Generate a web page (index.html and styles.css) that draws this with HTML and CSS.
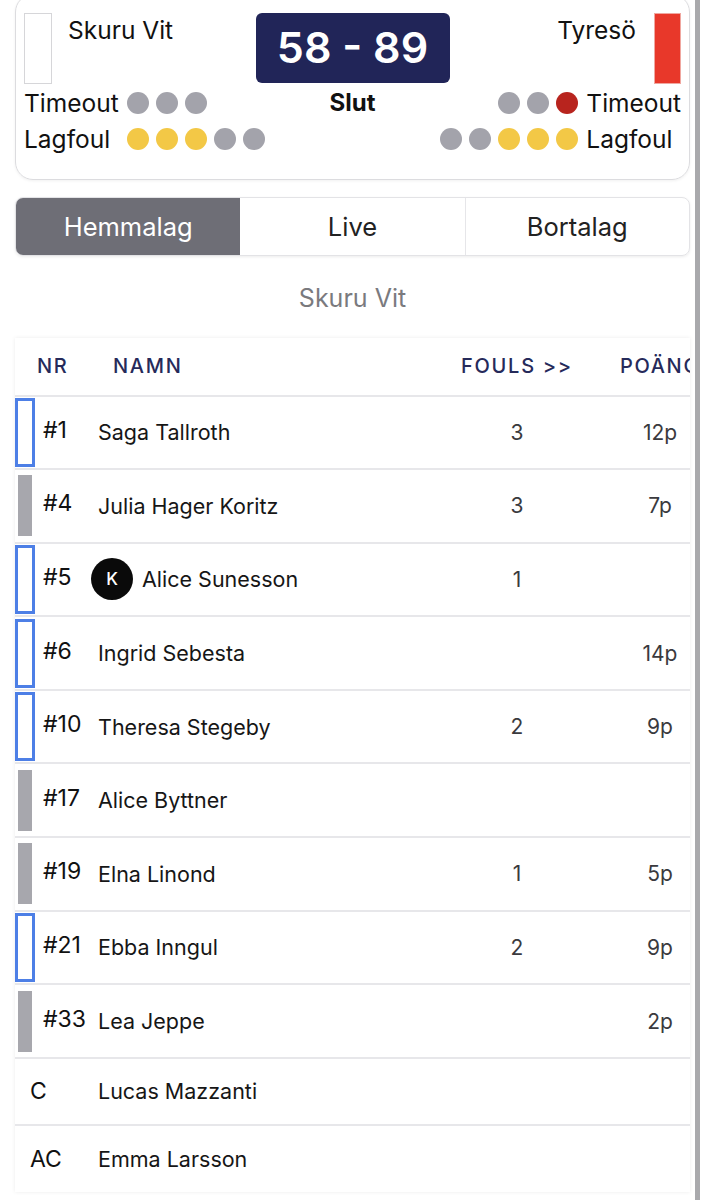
FILE: index.html
```html
<!DOCTYPE html>
<html lang="sv">
<head>
<meta charset="utf-8">
<title>Skuru Vit – Tyresö</title>
<link rel="stylesheet" href="styles.css">
</head>
<body>
<div class="screen">
  <main class="content">
    <section class="scoreboard">
      <div class="side side-home">
        <div class="team">
          <span class="jersey jersey-white"></span>
          <span class="team-name">Skuru Vit</span>
        </div>
        <div class="stats">
          <span class="label">Timeout</span>
          <span class="dots"><i class="dot"></i><i class="dot"></i><i class="dot"></i></span>
          <span class="label">Lagfoul</span>
          <span class="dots"><i class="dot yellow"></i><i class="dot yellow"></i><i class="dot yellow"></i><i class="dot"></i><i class="dot"></i></span>
        </div>
      </div>
      <div class="middle">
        <div class="score">58 - 89</div>
        <div class="status">Slut</div>
      </div>
      <div class="side side-away">
        <div class="team">
          <span class="team-name">Tyresö</span>
          <span class="jersey jersey-red"></span>
        </div>
        <div class="stats">
          <span class="dots"><i class="dot"></i><i class="dot"></i><i class="dot red"></i></span>
          <span class="label">Timeout</span>
          <span class="dots"><i class="dot"></i><i class="dot"></i><i class="dot yellow"></i><i class="dot yellow"></i><i class="dot yellow"></i></span>
          <span class="label">Lagfoul</span>
        </div>
      </div>
    </section>

    <nav class="tabs">
      <span class="tab active">Hemmalag</span>
      <span class="tab">Live</span>
      <span class="tab">Bortalag</span>
    </nav>

    <h2 class="roster-title">Skuru Vit</h2>

    <section class="roster">
      <div class="roster-inner">
        <div class="row head">
          <span class="c-nr">NR</span>
          <span class="c-name">NAMN</span>
          <span class="c-fouls">FOULS &gt;&gt;</span>
          <span class="c-pts">POÄNG</span>
        </div>

        <div class="row player">
          <span class="mark on"></span><span class="num">#1</span>
          <span class="name">Saga Tallroth</span>
          <span class="fouls">3</span><span class="pts">12p</span>
        </div>
        <div class="row player">
          <span class="mark off"></span><span class="num">#4</span>
          <span class="name">Julia Hager Koritz</span>
          <span class="fouls">3</span><span class="pts">7p</span>
        </div>
        <div class="row player">
          <span class="mark on"></span><span class="num">#5</span>
          <span class="name"><span class="captain">K</span>Alice Sunesson</span>
          <span class="fouls">1</span><span class="pts"></span>
        </div>
        <div class="row player">
          <span class="mark on"></span><span class="num">#6</span>
          <span class="name">Ingrid Sebesta</span>
          <span class="fouls"></span><span class="pts">14p</span>
        </div>
        <div class="row player">
          <span class="mark on"></span><span class="num">#10</span>
          <span class="name">Theresa Stegeby</span>
          <span class="fouls">2</span><span class="pts">9p</span>
        </div>
        <div class="row player">
          <span class="mark off"></span><span class="num">#17</span>
          <span class="name">Alice Byttner</span>
          <span class="fouls"></span><span class="pts"></span>
        </div>
        <div class="row player">
          <span class="mark off"></span><span class="num">#19</span>
          <span class="name">Elna Linond</span>
          <span class="fouls">1</span><span class="pts">5p</span>
        </div>
        <div class="row player">
          <span class="mark on"></span><span class="num">#21</span>
          <span class="name">Ebba Inngul</span>
          <span class="fouls">2</span><span class="pts">9p</span>
        </div>
        <div class="row player">
          <span class="mark off"></span><span class="num">#33</span>
          <span class="name">Lea Jeppe</span>
          <span class="fouls"></span><span class="pts">2p</span>
        </div>

        <div class="row staff">
          <span class="role">C</span>
          <span class="name">Lucas Mazzanti</span>
        </div>
        <div class="row staff">
          <span class="role">AC</span>
          <span class="name">Emma Larsson</span>
        </div>
      </div>
    </section>
  </main>
  <div class="rail"></div>
</div>
</body>
</html>
```

FILE: styles.css
```css
* { box-sizing: border-box; }

html, body {
  margin: 0;
  background: #fff;
}

body {
  font-family: Inter, "Noto Sans", sans-serif;
  color: #111;
  overflow: hidden;
}

.screen {
  display: flex;
  height: 1200px;
  overflow: hidden;
}

.content {
  width: 695px;
  flex: none;
  padding: 0 5px 0 15px;
}

.rail {
  width: 5px;
  flex: none;
  background: #a9a9ac;
}

/* ---------- scoreboard ---------- */
.scoreboard {
  margin-top: -6px;
  border: 1.5px solid #dcdcdf;
  border-radius: 18px;
  padding: 17.5px 8px 22px 8px;
  display: grid;
  grid-template-columns: minmax(0, 1fr) 194px minmax(0, 1fr);
  box-shadow: 0 1px 3px rgba(0, 0, 0, 0.06);
}

.side { display: flex; flex-direction: column; min-width: 0; }
.side-home { align-items: flex-start; }
.side-away { align-items: flex-end; }

.team {
  display: flex;
  align-items: flex-start;
  height: 71px;
}

.jersey {
  width: 28px;
  height: 71px;
  flex: none;
}
.jersey-white { border: 1px solid #d6d6d9; background: #fff; }
.jersey-red { width: 27px; background: #e8382a; border: 1px solid #f0a7a0; }

.team-name {
  font-size: 24.5px;
  line-height: 28px;
  padding-top: 3px;
  white-space: nowrap;
}
.side-home .team-name { margin-left: 16px; }
.side-away .team-name { margin-right: 18px; }

.stats {
  display: grid;
  grid-template-columns: auto auto;
  column-gap: 8px;
  align-items: center;
  margin-top: 1px;
  flex: none;
}
.side-away .stats .dots { justify-self: end; }
.side-away .stats .label { justify-self: start; }

.label {
  font-size: 24.5px;
  line-height: 36px;
  white-space: nowrap;
}

.dots { display: flex; gap: 7px; }
.dot {
  width: 22px;
  height: 22px;
  border-radius: 50%;
  background: #a3a3ab;
}
.dot.yellow { background: #f3c846; }
.dot.red { background: #b8241e; }

.middle {
  display: flex;
  flex-direction: column;
  align-items: center;
}

.score {
  width: 194px;
  height: 70px;
  background: #212558;
  color: #fff;
  border-radius: 6px;
  display: flex;
  align-items: center;
  justify-content: center;
  font-size: 43px;
  font-weight: 600;
  padding-bottom: 2px;
}

.status {
  margin-top: 2px;
  font-size: 24px;
  font-weight: 700;
  line-height: 36px;
}

/* ---------- tabs ---------- */
.tabs {
  margin-top: 17px;
  display: grid;
  grid-template-columns: repeat(3, 1fr);
  height: 59px;
  border: 1px solid #e3e3e6;
  border-radius: 8px;
  overflow: hidden;
  box-shadow: 0 1px 3px rgba(0, 0, 0, 0.08);
}

.tab {
  display: flex;
  align-items: center;
  justify-content: center;
  font-size: 25.5px;
  color: #222;
}
.tab + .tab { border-left: 1px solid #e6e6e9; }
.tab.active { background: #6e6e76; color: #fff; border-left: none; }
.tab.active + .tab { border-left: none; }

.roster-title {
  margin: 26px 0 0;
  text-align: center;
  font-size: 25px;
  font-weight: 400;
  color: #7a7a7e;
  line-height: 32px;
}

/* ---------- roster table ---------- */
.roster {
  margin-top: 24px;
  overflow: hidden;
  background: #fff;
  box-shadow: 0 0 4px rgba(0, 0, 0, 0.08);
}

.roster-inner { width: 695px; }

.row {
  display: flex;
  align-items: center;
  border-bottom: 2.5px solid #e7e7ea;
}

.head {
  height: 59px;
  font-size: 20px;
  font-weight: 500;
  letter-spacing: 1.7px;
  color: #262a5a;
}
.head .c-nr { width: 98px; padding-left: 22px; }
.head .c-name { flex: 1; }
.head .c-fouls { width: 114px; text-align: center; margin-right: 36px; white-space: nowrap; }
.head .c-pts { width: 100px; text-align: center; white-space: nowrap; }

.player { height: 73.6px; }

.mark {
  width: 20px;
  height: 69px;
  flex: none;
  border: 3px solid transparent;
}
.mark.on { border-color: #4d7fe6; }
.mark.off { background: #a7a7ad; background-clip: padding-box; height: 67px; }

.num {
  width: 63px;
  padding-left: 8px;
  font-size: 23px;
  margin-top: -5px;
}

.name {
  flex: 1;
  display: flex;
  align-items: center;
  font-size: 21.5px;
  color: #161616;
  white-space: nowrap;
}

.captain {
  width: 42px;
  height: 42px;
  border-radius: 50%;
  background: #0a0a0a;
  color: #fff;
  font-size: 17px;
  font-weight: 500;
  display: flex;
  align-items: center;
  justify-content: center;
  margin-left: -7px;
  margin-right: 9px;
  flex: none;
}

.fouls, .pts {
  font-size: 21px;
  color: #3a3a3e;
  text-align: center;
}
.fouls { width: 114px; margin-right: 36px; }
.pts { width: 100px; }

.staff { height: 67px; }
.staff:last-child { border-bottom: none; height: 66px; }

.role {
  width: 83px;
  padding-left: 15px;
  font-size: 23px;
}
```
